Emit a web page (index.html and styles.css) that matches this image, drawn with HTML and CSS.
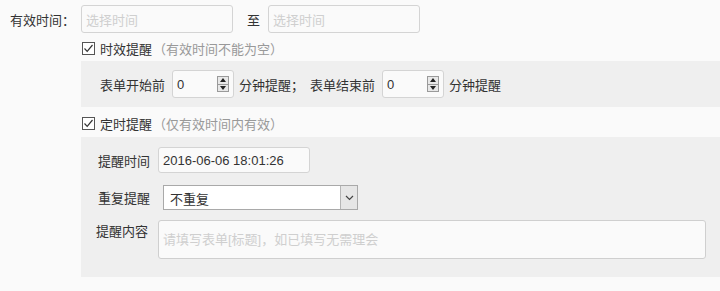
FILE: index.html
```html
<!DOCTYPE html>
<html lang="zh-CN">
<head>
<meta charset="utf-8">
<link rel="stylesheet" href="styles.css">
</head>
<body>
<div class="row-time">
  <span class="lbl-main">有效时间：</span>
  <div class="field field-date"><span class="ph">选择时间</span></div>
  <span class="to">至</span>
  <div class="field field-date"><span class="ph">选择时间</span></div>
</div>
<div class="section">
  <div class="check-row first">
    <span class="cb"><svg width="13" height="13" viewBox="0 0 13 13"><rect x="0.5" y="0.5" width="12" height="12" fill="#fff" stroke="#555"/><path d="M2.5 6.5 L5.2 9.3 L10.5 3" fill="none" stroke="#333" stroke-width="1.2"/></svg></span>
    <span class="cb-text">时效提醒</span><span class="hint">（有效时间不能为空）</span>
  </div>
  <div class="panel panel-a">
    <span class="plain">表单开始前</span>
    <div class="field spin"><span class="val">0</span><span class="spinner"><span class="up"></span><span class="down"></span></span></div>
    <span class="plain">分钟提醒；</span>
    <span class="plain gap-l">表单结束前</span>
    <div class="field spin"><span class="val">0</span><span class="spinner"><span class="up"></span><span class="down"></span></span></div>
    <span class="plain">分钟提醒</span>
  </div>
  <div class="check-row second">
    <span class="cb"><svg width="13" height="13" viewBox="0 0 13 13"><rect x="0.5" y="0.5" width="12" height="12" fill="#fff" stroke="#555"/><path d="M2.5 6.5 L5.2 9.3 L10.5 3" fill="none" stroke="#333" stroke-width="1.2"/></svg></span>
    <span class="cb-text">定时提醒</span><span class="hint">（仅有效时间内有效）</span>
  </div>
  <div class="panel panel-b">
    <div class="form-row">
      <span class="flabel">提醒时间</span>
      <div class="field field-dt"><span class="val">2016-06-06 18:01:26</span></div>
    </div>
    <div class="form-row">
      <span class="flabel">重复提醒</span>
      <div class="select"><span class="sel-text">不重复</span><span class="sel-btn"><svg width="9" height="6" viewBox="0 0 9 6"><path d="M1 1 L4.5 4.5 L8 1" fill="none" stroke="#444" stroke-width="1.2"/></svg></span></div>
    </div>
    <div class="form-row top">
      <span class="flabel narrow">提醒内容</span>
      <div class="field field-area"><span class="ph">请填写表单[标题]，如已填写无需理会</span></div>
    </div>
  </div>
</div>
</body>
</html>
```
FILE: styles.css
```css
* { box-sizing: border-box; }
html, body { margin: 0; padding: 0; }
body {
  background: #fafafa;
  font-family: "Liberation Sans", "Noto Sans CJK SC", sans-serif;
  font-size: 13px;
  color: #333;
  width: 720px;
  height: 291px;
  overflow: hidden;
}
.row-time {
  display: flex;
  align-items: center;
  height: 28px;
  margin-top: 5px;
}
.lbl-main {
  width: 81px;
  padding-left: 10px;
  white-space: nowrap;
}
.field {
  border: 1px solid #d4d4d4;
  border-radius: 3px;
  background: #fafafa;
  display: flex;
  align-items: center;
}
.field-date {
  width: 152px;
  height: 28px;
  padding-left: 4px;
}
.ph { color: #cfcfcf; }
.to {
  margin: 0 8px 0 14px;
}
.section {
  margin-left: 81px;
}
.check-row {
  display: flex;
  align-items: center;
  height: 26px;
}
.check-row.first { margin-top: 2px; }
.check-row.second { margin-top: 3px; height: 27px; }
.cb {
  display: flex;
  width: 13px;
  height: 13px;
  margin-left: 1px;
  margin-right: 5px;
}
.cb-text { color: #333; }
.hint { color: #999; margin-left: 1px; }
.panel {
  background: #efefef;
}
.panel-a {
  height: 46px;
  display: flex;
  align-items: center;
  padding-left: 19px;
}
.plain { white-space: nowrap; }
.gap-l { margin-left: 6px; }
.spin {
  width: 62px;
  height: 28px;
  margin: 0 5px 0 7px;
  padding-left: 4px;
  padding-right: 4px;
  color: #333;
}
.spin .val { flex: 1; }
.spinner {
  display: flex;
  flex-direction: column;
  width: 12px;
  height: 16px;
  border: 1px solid #9a9a9a;
  background: #e8e8e8;
}
.spinner .up, .spinner .down {
  flex: 1;
  display: flex;
  align-items: center;
  justify-content: center;
}
.spinner .up { border-bottom: 1px solid #9a9a9a; }
.spinner .up::after {
  content: "";
  border-left: 3px solid transparent;
  border-right: 3px solid transparent;
  border-bottom: 4px solid #222;
}
.spinner .down::after {
  content: "";
  border-left: 3px solid transparent;
  border-right: 3px solid transparent;
  border-top: 4px solid #222;
}
.panel-b {
  height: 140px;
  padding: 10px 14px 0 17px;
  display: flex;
  flex-direction: column;
}
.form-row {
  display: flex;
  align-items: center;
}
.form-row + .form-row { margin-top: 12px; }
.form-row.top { align-items: flex-start; margin-top: 10px; }
.flabel {
  width: 60px;
  white-space: nowrap;
}
.flabel.narrow { margin-left: -2px; width: 62px; padding-top: 1px; }
.field-dt {
  width: 152px;
  height: 26px;
  padding-left: 4px;
  background: #fafafa;
}
.select {
  width: 195px;
  height: 25px;
  margin-left: 5px;
  border: 1px solid #a9a9a9;
  background: #fff;
  display: flex;
  align-items: center;
}
.sel-text {
  flex: 1;
  padding-left: 6px;
  padding-top: 2px;
}
.sel-btn {
  width: 17px;
  height: 23px;
  background: #e6e6e6;
  border-left: 1px solid #b5b5b5;
  display: flex;
  align-items: center;
  justify-content: center;
}
.field-area {
  width: 548px;
  height: 39px;
  align-items: flex-start;
  padding: 8px 0 0 4px;
  border-color: #cfcfcf;
}
```
